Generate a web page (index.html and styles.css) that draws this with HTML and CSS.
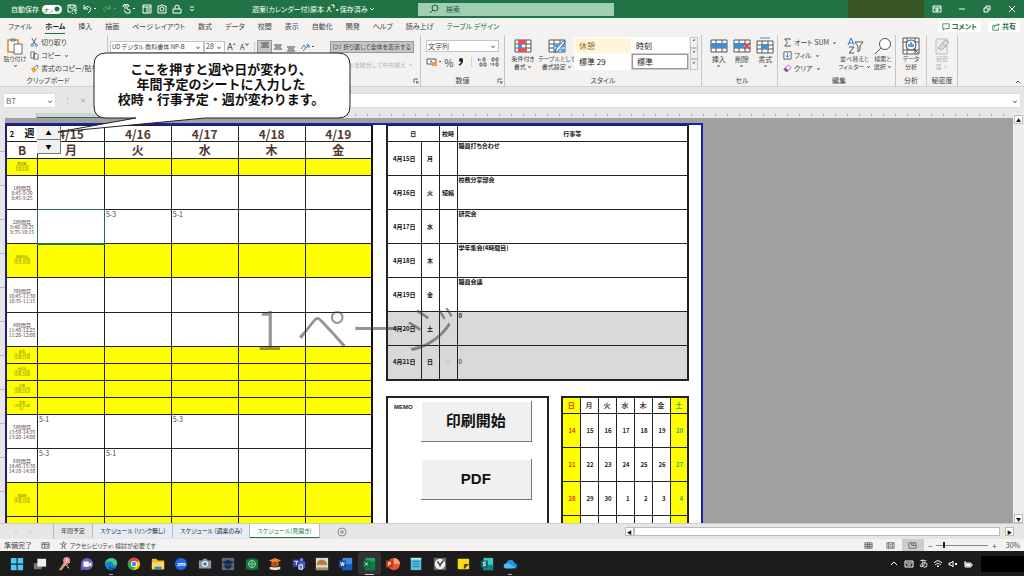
FILE: index.html
```html
<!DOCTYPE html>
<html lang="ja">
<head>
<meta charset="utf-8">
<title>週案(カレンダー付)原本</title>
<link rel="stylesheet" href="styles.css">
</head>
<body>
<header class="titlebar">
  <div class="quick">
    <label class="autosave">自動保存 <input type="checkbox" class="switch" checked><span class="switch-text">オン</span></label>
    <svg class="qi" viewBox="0 0 10 10"><path d="M1 1h7l1 1v3M1 1v7h3M3 1v3h4V1M5 8a2 2 0 0 1 4-1M9 5v2H7M9 8a2 2 0 0 1-4 1"/></svg>
    <svg class="qi wide" viewBox="0 0 15 10"><path d="M2 1v4h4M2 5c3-5 9-1 6 2L6 9M12 4l1 1 1-1"/></svg>
    <svg class="qi wide faint" viewBox="0 0 15 10"><path d="M8 1v4H4M8 5C5 0-1 4 3 8M12 4l1 1 1-1"/></svg>
    <svg class="qi wide" viewBox="0 0 15 10"><path d="M3 5V2a1 1 0 0 1 2 0v3l3 1v3H4L2 6M1 3a3 3 0 0 1 6 0M11 4l1 1 1-1"/></svg>
    <svg class="qi" viewBox="0 0 10 10"><path d="M1 1h8v8H1zM1 3h8M5 3v6M6 5h2M6 7h2"/></svg>
    <svg class="qi" viewBox="0 0 10 10"><path d="M1 2h2l1-1h2l1 1h2v7H1z"/><circle cx="5" cy="5" r="2"/></svg>
    <svg class="qi" viewBox="0 0 10 10"><path d="M1 5h8v4H1zM3 5V2l2-1 2 1v3"/></svg>
    <svg class="qi" viewBox="0 0 10 10"><path d="M3 3h4M3 5l2 2 2-2"/></svg>
  </div>
  <div class="doc">週案(カレンダー付)原本 <svg class="qi" viewBox="0 0 10 10"><circle cx="4" cy="4" r="1"/><path d="M2 8c0-3 4-3 4 0M6 1h3v3"/></svg> • 保存済み <svg class="chev" viewBox="0 0 6 6"><path d="M1 2l2 2 2-2"/></svg></div>
  <label class="search"><svg class="qi dark" viewBox="0 0 10 10"><circle cx="6" cy="4" r="3"/><path d="M4 6L1 9"/></svg><input type="search" placeholder="検索" aria-label="検索"></label>
  <div class="account"></div>
  <div class="window-buttons">
    <button aria-label="リボンの表示"><svg class="qi" viewBox="0 0 10 10"><path d="M1 2h8v6H1zM1 4h8M5 4v4M3 6h4"/></svg></button>
    <button aria-label="最小化"><svg class="qi" viewBox="0 0 10 10"><path d="M2 5h6"/></svg></button>
    <button aria-label="元に戻す"><svg class="qi" viewBox="0 0 10 10"><path d="M2 4h4v4H2zM4 4V2h4v4H6"/></svg></button>
    <button aria-label="閉じる"><svg class="qi" viewBox="0 0 10 10"><path d="M2 2l6 6M8 2L2 8"/></svg></button>
  </div>
</header>

<nav class="tabs">
  <a href="#">ファイル</a><a href="#" class="on">ホーム</a><a href="#">挿入</a><a href="#">描画</a><a href="#">ページ レイアウト</a><a href="#">数式</a><a href="#">データ</a><a href="#">校閲</a><a href="#">表示</a><a href="#">自動化</a><a href="#">開発</a><a href="#">ヘルプ</a><a href="#">読み上げ</a><a href="#" class="green">テーブル デザイン</a>
  <span class="tab-actions">
    <button><svg class="ti" viewBox="0 0 10 10"><path d="M1 1h8v6H4L2 9V7H1z"/></svg>コメント</button>
    <button><svg class="ti" viewBox="0 0 10 10"><path d="M5 3H1v6h7V6M3 6c0-3 2-4 6-4M7 1l2 1-2 2"/></svg>共有</button>
  </span>
</nav>

<section class="ribbon">
  <div class="group clipboard">
    <div class="tools">
      <button class="big"><svg viewBox="0 0 18 18"><path d="M2 3h10v12H2z" fill="#fff" stroke="#d98b2b" stroke-width="1.5"/><path d="M5 4V2h4v2z" fill="#ddd" stroke="#666"/><path d="M8 7h8v10H8z" fill="#fff" stroke="#666"/></svg><span>貼り付け</span><i class="caret"></i></button>
      <div class="stack three">
        <button><svg viewBox="0 0 10 10"><path d="M2 0l4 7M7 0L3 7" stroke="#555"/><circle cx="2.500" cy="8" r="1.300" fill="none" stroke="#2b7cd3"/><circle cx="7" cy="8" r="1.300" fill="none" stroke="#2b7cd3"/></svg>切り取り</button>
        <button><svg viewBox="0 0 10 10"><path d="M1 1h4v7H1zM4 3h4l1 1v5H4z" fill="#fff" stroke="#666"/></svg>コピー <i class="caret"></i></button>
        <button><svg viewBox="0 0 10 10"><path d="M1 5l4-2 2 4-3 3z" fill="#f0a030"/><path d="M5 4l3-3 1 2-2 3" fill="#fff" stroke="#666"/></svg>書式のコピー/貼り付け</button>
      </div>
    </div>
    <div class="name">クリップボード</div>
  </div>
  <div class="group fontalign">
    <div class="tools row">
      <label class="drop fontname"><select aria-label="フォント"><option>UD デジタル 教科書体 NP-B</option></select></label>
      <label class="drop size"><select aria-label="サイズ"><option>28</option></select></label>
      <button class="letter">Aˆ</button><button class="letter small">Aˇ</button>
      <span class="bar"></span>
      <button class="al on" aria-label="上揃え"><svg viewBox="0 0 10 10"><path d="M1 1h8M2 3h6M1 5h8" stroke="#444"/></svg></button>
      <button class="al" aria-label="中央揃え"><svg viewBox="0 0 10 10"><path d="M1 3h8M2 5h6M1 7h8" stroke="#444"/></svg></button>
      <button class="al" aria-label="下揃え"><svg viewBox="0 0 10 10"><path d="M1 5h8M2 7h6M1 9h8" stroke="#444"/></svg></button>
      <button class="al turn" aria-label="方向"><svg viewBox="0 0 16 10"><path d="M1 7l3-4 2 3" fill="none" stroke="#777"/><path d="M3 9l6-6M6 3h3v3" fill="none" stroke="#2b7cd3"/><path d="M12 4l1 1 1-1" stroke="#555" fill="none"/></svg></button>
      <button class="wrap"><svg viewBox="0 0 10 10"><path d="M1 1v8M9 1v8" stroke="#777"/><path d="M3 3h3v4H3M4 6L3 7l1 1" fill="none" stroke="#2b7cd3"/></svg>折り返して全体を表示する</button>
    </div>
    <button class="merge" disabled>セルを結合して中央揃え <i class="caret"></i></button>
    <svg class="launch" viewBox="0 0 6 6"><path d="M1 5V1h4M3 3l2 2M5 3v2H3"/></svg>
  </div>
  <div class="group number">
    <div class="tools column">
      <label class="drop"><select aria-label="表示形式"><option>文字列</option></select></label>
      <div class="numrow">
        <button aria-label="通貨"><svg viewBox="0 0 16 10"><path d="M1 2h9v5H1z" fill="#fff" stroke="#555"/><circle cx="5" cy="4.500" r="1" fill="#555"/><path d="M6 5h5v4H6z" fill="#e8a04a"/><path d="M13 4l1 1 1-1" stroke="#555" fill="none"/></svg></button>
        <button class="sym">%</button>
        <button aria-label="桁区切り"><svg viewBox="0 0 10 10"><circle cx="5" cy="3" r="2" fill="#222"/><path d="M6 3c1 3-1 4-3 5" fill="none" stroke="#222" stroke-width="1.500"/></svg></button>
        <span class="bar"></span>
        <button aria-label="小数点増"><svg viewBox="0 0 10 10"><path d="M1 3h3M2 1L1 3l1 1" stroke="#2b7cd3" fill="none"/><path d="M6 1h2v3H6zM3 6h2v3H3zM7 6h2v3H7z" fill="none" stroke="#666"/></svg></button>
        <button aria-label="小数点減"><svg viewBox="0 0 10 10"><path d="M3 1h2v3H3zM7 1h2v3H7zM7 6h2v3H7z" fill="none" stroke="#666"/><path d="M1 7h4M4 6l1 1-1 2" stroke="#2b7cd3" fill="none"/></svg></button>
      </div>
    </div>
    <div class="name">数値</div><svg class="launch" viewBox="0 0 6 6"><path d="M1 5V1h4M3 3l2 2M5 3v2H3"/></svg>
  </div>
  <div class="group style">
    <div class="tools">
      <button class="big two"><svg viewBox="0 0 18 18"><path d="M1 3h16v12H1zM1 7h16M1 11h16M6 3v12M12 3v12" fill="#fff" stroke="#555"/><path d="M4 3h8v4H4zM4 11h9v4H4z" fill="#e0525c"/><path d="M4 7h4v4H4z" fill="#4a90d0"/></svg><span>条件付き<br>書式 <i class="caret"></i></span></button>
      <button class="big two"><svg viewBox="0 0 18 18"><path d="M1 3h16v12H1zM1 7h16M1 11h16M6 3v12M12 3v12" fill="#fff" stroke="#555"/><path d="M6 7h11v8H6z" fill="#4fa3e0"/><path d="M6 11h11M12 7v8" stroke="#fff"/><path d="M17 5l-6 8-4 3 1-4 7-8z" fill="#fff" stroke="#2472b8"/></svg><span>テーブルとして<br>書式設定 <i class="caret"></i></span></button>
      <div class="gallery"><button class="rest">休憩</button><button>時刻</button><button>標準 29</button><button class="picked">標準</button></div>
      <div class="gallery-scroll"><button aria-label="上"><i class="caret up"></i></button><button aria-label="下"><i class="caret"></i></button><button aria-label="その他"><i class="caret"></i></button></div>
    </div>
    <div class="name">スタイル</div>
  </div>
  <div class="group cells">
    <div class="tools">
      <button class="big"><svg viewBox="0 0 18 18"><path d="M1 3h16v12H1zM1 7h16M1 11h16M6 3v12M12 3v12" fill="#fff" stroke="#555"/><path d="M3 6h14v5H3L0 8.500z" fill="#3f8fd0"/></svg><span>挿入</span><i class="caret"></i></button>
      <button class="big"><svg viewBox="0 0 18 18"><path d="M1 3h16v12H1zM1 7h16M1 11h16M6 3v12M12 3v12" fill="#fff" stroke="#555"/><path d="M1 6h10v5H1z" fill="#3f8fd0"/><path d="M11 6l6 6M17 6l-6 6" stroke="#d83b3b" stroke-width="1.500"/></svg><span>削除</span><i class="caret"></i></button>
      <button class="big"><svg viewBox="0 0 18 18"><path d="M1 4h16v12H1zM1 8h16M1 12h16M6 4v12M12 4v12" fill="#fff" stroke="#555"/><path d="M5 7h8v5H5z" fill="#3f8fd0"/><path d="M4 1h10" stroke="#3f8fd0"/></svg><span>書式</span><i class="caret"></i></button>
    </div>
    <div class="name">セル</div>
  </div>
  <div class="group edit">
    <div class="tools">
      <div class="stack three">
        <button><svg viewBox="0 0 10 10"><path d="M8 2V1H2l3 4-3 4h6V8" fill="none" stroke="#444"/></svg>オート SUM <i class="caret"></i></button>
        <button><svg viewBox="0 0 10 10"><path d="M1 1h8v8H1z" fill="#fff" stroke="#555"/><path d="M5 2v5M3 5l2 2 2-2" fill="none" stroke="#2b7cd3"/></svg>フィル <i class="caret"></i></button>
        <button><svg viewBox="0 0 10 10"><path d="M1 6l5-5 3 3-5 5z" fill="#fff" stroke="#a349a4"/><path d="M1 6l2-2 3 3-2 2z" fill="#a349a4"/></svg>クリア <i class="caret"></i></button>
      </div>
      <button class="big two"><svg viewBox="0 0 18 18"><path d="M2 8l3-7 3 7M3 6h4" fill="none" stroke="#2b7cd3"/><path d="M3 10h5l-5 6h5" fill="none" stroke="#555"/><path d="M9 5h8l-3 4v4l-2 2V9z" fill="#fff" stroke="#555"/></svg><span>並べ替えと<br>フィルター <i class="caret"></i></span></button>
      <button class="big two"><svg viewBox="0 0 18 18"><circle cx="11" cy="7" r="5.500" fill="#fff" stroke="#555"/><path d="M7 11l-6 6" stroke="#555"/></svg><span>検索と<br>選択 <i class="caret"></i></span></button>
    </div>
    <div class="name">編集</div>
  </div>
  <div class="group narrow">
    <div class="tools"><button class="big two"><svg viewBox="0 0 18 18"><path d="M1 1h16v16H1zM1 5h16M1 13h16M5 1v16M13 1v16" fill="#fff" stroke="#555"/><circle cx="9" cy="8" r="5" fill="#fff" stroke="#444"/><path d="M7 10V7M9 10V5M11 10V7" stroke="#2b7cd3" stroke-width="1.500"/><path d="M12 12l4 4" stroke="#444"/></svg><span>データ<br>分析</span></button></div>
    <div class="name">分析</div>
  </div>
  <div class="group narrow">
    <div class="tools off"><button class="big two" disabled><svg viewBox="0 0 18 18"><path d="M3 2h11v15H3z" fill="#eee" stroke="#bbb"/><path d="M5 11l7-8 4 2-7 8zM9 6l4 4" fill="#ddd" stroke="#aaa"/></svg><span>秘密<br>度 <i class="caret"></i></span></button></div>
    <div class="name">秘密度</div>
  </div>
  <svg class="collapse" viewBox="0 0 6 6"><path d="M1 4l2-2 2 2"/></svg>
</section>

<section class="formula">
  <label class="drop namebox"><select aria-label="名前ボックス"><option>B7</option></select></label>
  <div class="fx"><span>⋮</span><span>✕</span></div>
  <label class="drop entry"><input type="text" aria-label="数式"></label>
</section>

<main class="workspace">
  <div class="col-ruler"><span class="col-a"></span><span class="col-b"></span><span class="ticks"></span></div>
  <div class="canvas">
    <div class="row-ruler"></div>
    <div class="page">
      <table class="week">
        <colgroup><col class="c-time"><col><col><col><col><col></colgroup>
        <tr class="head"><td class="weekno"><span>2</span> <b>週</b></td><th>4/15</th><th>4/16</th><th>4/17</th><th>4/18</th><th>4/19</th></tr>
        <tr class="short"><th>B</th><th>月</th><th>火</th><th>水</th><th>木</th><th>金</th></tr>
        <tr class="short break"><td class="time">朝活動<br>8:20-8:30<br>8:20-8:30</td><td></td><td></td><td></td><td></td><td></td></tr>
        <tr><td class="time">1時間目<br>8:45-9:30<br>8:45-9:25</td><td></td><td></td><td></td><td></td><td></td></tr>
        <tr><td class="time">2時間目<br>9:40-10:25<br>9:35-10:15</td><td class="selected"></td><td>5-3</td><td>5-1</td><td></td><td></td></tr>
        <tr class="break"><td class="time">業間休み<br>10:25-10:40<br>10:15-10:30</td><td></td><td></td><td></td><td></td><td></td></tr>
        <tr class="tall"><td class="time">3時間目<br>10:45-11:30<br>10:35-11:15</td><td></td><td></td><td></td><td></td><td></td></tr>
        <tr><td class="time">4時間目<br>11:40-12:25<br>11:20-12:00</td><td></td><td></td><td></td><td></td><td></td></tr>
        <tr class="short break"><td class="time">給食<br>12:25-13:10<br>12:00-12:45</td><td></td><td></td><td></td><td></td><td></td></tr>
        <tr class="short break"><td class="time">昼休み<br>13:10-13:30<br>12:45-13:00</td><td></td><td></td><td></td><td></td><td></td></tr>
        <tr class="short break"><td class="time">清掃<br>13:30-13:45<br>13:00-13:15</td><td></td><td></td><td></td><td></td><td></td></tr>
        <tr class="short break"><td class="time">学習<br>13:40-13:50<br>なし</td><td></td><td></td><td></td><td></td><td></td></tr>
        <tr><td class="time">5時間目<br>13:50-14:35<br>13:20-14:00</td><td>5-1</td><td></td><td>5-3</td><td></td><td></td></tr>
        <tr><td class="time">6時間目<br>14:40-15:30<br>14:10-14:50</td><td>5-3</td><td>5-1</td><td></td><td></td><td></td></tr>
        <tr class="break"><td class="time">放課後<br>15:30-15:45<br>14:50-15:05</td><td></td><td></td><td></td><td></td><td></td></tr>
        <tr class="break"><td class="time"></td><td></td><td></td><td></td><td></td><td></td></tr>
      </table>
      <div class="side">
        <table class="events">
          <colgroup><col class="e-date"><col class="e-day"><col class="e-type"><col></colgroup>
          <tr class="head"><th colspan="2">日</th><th>校時</th><th>行事等</th></tr>
          <tr><th>4月15日</th><th>月</th><th></th><td>職員打ち合わせ</td></tr>
          <tr><th>4月16日</th><th>火</th><th>短縮</th><td>校務分掌部会</td></tr>
          <tr><th>4月17日</th><th>水</th><th></th><td>研究会</td></tr>
          <tr><th>4月18日</th><th>木</th><th></th><td>学年集会(4時間目)</td></tr>
          <tr><th>4月19日</th><th>金</th><th></th><td>職員会議</td></tr>
          <tr class="off-day"><th>4月20日</th><th>土</th><th></th><td>0</td></tr>
          <tr class="off-day"><th>4月21日</th><th>日</th><th class="ghost">0</th><td class="mid">0</td></tr>
        </table>
        <div class="lower">
          <div class="memo"><span>MEMO</span><div class="macro"><button>印刷開始</button><button>PDF</button></div></div>
          <table class="cal">
            <tr class="short"><th class="sun">日</th><th>月</th><th>火</th><th>水</th><th>木</th><th>金</th><th class="sat">土</th></tr>
            <tr><td class="sun">14</td><td>15</td><td>16</td><td>17</td><td>18</td><td>19</td><td class="sat">20</td></tr>
            <tr><td class="sun">21</td><td>22</td><td>23</td><td>24</td><td>25</td><td>26</td><td class="sat">27</td></tr>
            <tr><td class="sun">28</td><td>29</td><td>30</td><td>1</td><td>2</td><td>3</td><td class="sat">4</td></tr>
            <tr><td class="sun"></td><td></td><td></td><td></td><td></td><td></td><td class="sat"></td></tr>
          </table>
        </div>
      </div>
      <div class="watermark">1 ページ</div>
      <div class="spinner"><button aria-label="前の週">▲</button><button aria-label="次の週">▼</button></div>
    </div>
  </div>
  <div class="vscroll"><button aria-label="上へ">▲</button><button aria-label="下へ">▼</button></div>
</main>

<footer class="sheets">
  <div class="sheet-nav">‹<span>›</span></div>
  <a href="#">年間予定</a><a href="#" class="tint">スケジュール (リンク無し)</a><a href="#" class="tint">スケジュール (週案のみ)</a><a href="#" class="current">スケジュール(見開き)</a>
  <button class="add" aria-label="新しいシート"><svg viewBox="0 0 10 10"><circle cx="5" cy="5" r="4"/><path d="M5 3v4M3 5h4"/></svg></button>
  <div class="hscroll"><button aria-label="左へ">◀</button><span></span><button aria-label="右へ">▶</button></div>
</footer>

<div class="status">
  <span>準備完了</span>
  <svg viewBox="0 0 10 10"><path d="M1 2h8v6H1zM1 4h8M4 2v6M6 6h2"/></svg>
  <span class="access"><svg viewBox="0 0 10 10"><circle cx="5" cy="2" r="1"/><path d="M1 3l3 1v2L3 9M9 3L6 4v2l1 3M4 6h2"/></svg>アクセシビリティ: 検討が必要です</span>
  <div class="views">
    <button aria-label="標準"><svg viewBox="0 0 10 10"><path d="M1 2h8v6H1zM1 4h8M1 6h8M4 2v6M6 2v6"/></svg></button>
    <button aria-label="ページ レイアウト"><svg viewBox="0 0 10 10"><path d="M1 2h8v6H1zM3 2v6M7 2v6M4 4h2M4 6h2"/></svg></button>
    <button class="on" aria-label="改ページ プレビュー"><svg viewBox="0 0 10 10"><path d="M1 2h8v6H1zM4 2v3h2V2M6 5h3"/></svg></button>
  </div>
  <label class="zoom">−<input type="range" min="10" max="400" value="60" aria-label="ズーム">+</label><span>30%</span>
</div>

<div class="taskbar">
  <div class="apps">
    <button aria-label="スタート"><svg viewBox="0 0 16 16"><path d="M1 1h7v7H1zM8.500 1H15v7H8.500zM1 8.500h7V15H1zM8.500 8.500H15V15H8.500z" fill="#4cc8f5"/><path d="M8 1v14M1 8h14" stroke="#1c1c1c"/></svg></button>
    <button aria-label="タスクビュー"><svg viewBox="0 0 16 16"><path d="M1 7h9v7H1z" fill="#777"/><path d="M5 2h10v9H5z" fill="#eee"/></svg></button>
    <button aria-label="ペン"><svg viewBox="0 0 16 16"><path d="M2 15l6-9 3 2-6 7z" fill="#c9a37a"/><circle cx="11" cy="4" r="4" fill="#ef8f96"/><path d="M11 2v4M9 8l5 5" stroke="#fff"/><path d="M12 8v5" stroke="#b55"/></svg></button>
    <button aria-label="チャット"><svg viewBox="0 0 16 16"><circle cx="8" cy="8" r="7" fill="#6a62c0"/><path d="M1 9v6l6-1z" fill="#6a62c0"/><path d="M4 5h6v6H4zM10 8l3-2v5l-3-2z" fill="#fff"/></svg></button>
    <button aria-label="Edge" class="open"><svg viewBox="0 0 16 16"><circle cx="8" cy="8" r="7" fill="#1585c8"/><path d="M1 8C2 0 15-1 15 7c0 3-4 3-5 1 1-4-7-4-9 0" fill="#49ca86"/><path d="M7 8c-2 3 2 6 6 4-3 5-10 2-6-4" fill="#0a509d"/></svg></button>
    <button aria-label="Chrome"><svg viewBox="0 0 16 16"><circle cx="8" cy="8" r="7" fill="#fbc116"/><path d="M8 8L2 4a7 7 0 0 1 12 0z" fill="#e84335"/><path d="M8 8L2 4a7 7 0 0 0 5 11l3-5z" fill="#34a853"/><circle cx="8" cy="8" r="3.500" fill="#fff"/><circle cx="8" cy="8" r="2.500" fill="#4285f4"/></svg></button>
    <button aria-label="エクスプローラー"><svg viewBox="0 0 16 16"><path d="M1 2h5l2 2h7v10H1z" fill="#f5b52a"/><path d="M1 6h14v8H1z" fill="#ffdb62"/><path d="M4 11h8v3H4z" fill="#2f8ad8"/></svg></button>
    <button aria-label="Zoom"><svg viewBox="0 0 16 16"><circle cx="8" cy="8" r="7" fill="#2165e8"/></svg><span class="zm">zm</span></button>
    <button aria-label="カメラ"><svg viewBox="0 0 16 16"><path d="M1 4h4l1-2h4l1 2h4v9H1z" fill="#8f969d"/><circle cx="8" cy="8" r="3.500" fill="#eee"/><circle cx="8" cy="8" r="2" fill="#2775bb"/></svg></button>
    <button aria-label="学習"><svg viewBox="0 0 16 16"><path d="M1 1h14v14H1z" fill="#5c6672"/><path d="M1 6l7-3 7 3-7 3zM4 8v4l4 2 4-2V8L8 10z" fill="#14295a"/></svg></button>
    <button aria-label="地球"><svg viewBox="0 0 16 16"><path d="M1 3l7-2 7 2v11l-7 1-7-1z" fill="#14753c"/><circle cx="8" cy="8" r="4" fill="none" stroke="#9be1ad"/><path d="M4 8h8M8 4v8" stroke="#9be1ad"/></svg></button>
    <button aria-label="教材"><svg viewBox="0 0 16 16"><path d="M1 4l7-3 7 3-7 3zM4 6v4l4 1 4-1V6" fill="#e8832b"/><path d="M2 11l6 1 6-1v3l-6 1-6-1z" fill="#f3e4ce"/><path d="M5 6h6v5H5z" fill="#a44b1a"/></svg></button>
    <button aria-label="Teams"><svg viewBox="0 0 16 16"><circle cx="11" cy="3" r="2" fill="#7b83eb"/><path d="M7 5h8v7l-4 3-4-2z" fill="#5059c9"/><path d="M1 3h8v8H1z" fill="#3f48a8"/><path d="M3 5h4M5 5v4M8 9h4v5H8z" stroke="#fff" fill="#4a78c8"/></svg></button>
    <button aria-label="写真"><svg viewBox="0 0 16 16"><path d="M1 1h14v14H1z" fill="#dadccf"/><path d="M2 9c0-8 11-8 12 0z" fill="#b57c4a"/><path d="M3 9h10v3H3z" fill="#f3cf9c"/><path d="M1 12h14v3H1z" fill="#8d9b71"/></svg></button>
    <button aria-label="Word"><svg viewBox="0 0 16 16"><path d="M4 1h11v14H4z" fill="#3a8ee0"/><path d="M4 8h11v7H4z" fill="#185abd"/><path d="M0 4h8v8H0z" fill="#174aa0"/><path d="M2 6l1 4 1-4 1 4 1-4" stroke="#fff" fill="none"/></svg></button>
    <button aria-label="Excel" class="active open"><svg viewBox="0 0 16 16"><path d="M4 1h11v14H4z" fill="#21a366"/><path d="M9 5h6v10H4V8z" fill="#107c41"/><path d="M1 4h8v8H1z" fill="#0d623a"/><path d="M3 6l4 4M7 6l-4 4" stroke="#fff"/></svg></button>
    <button aria-label="PowerPoint"><svg viewBox="0 0 16 16"><circle cx="9" cy="8" r="7" fill="#e05a3a"/><path d="M9 1a7 7 0 0 1 7 7H9z" fill="#ff9a7a"/><path d="M0 4h8v8H0z" fill="#c13b1b"/><path d="M3 10V6h2v2H3" stroke="#fff" fill="none"/></svg></button>
    <button aria-label="メモ帳"><svg viewBox="0 0 16 16"><path d="M2 1h12v14H2z" fill="#5cc3de"/><path d="M4 5h8M4 8h8M4 11h8" stroke="#15718f"/><path d="M2 1h12v2H2z" fill="#b8ecf6"/></svg></button>
    <button aria-label="時計"><svg viewBox="0 0 16 16"><path d="M1 1h14v14H1z" fill="#6c6c6c"/><circle cx="8" cy="8" r="6" fill="#eee"/><path d="M5 5l3 4 4-5M8 9v2" fill="none" stroke="#333" stroke-width="1.500"/></svg></button>
    <button aria-label="付箋"><svg viewBox="0 0 16 16"><path d="M2 2h13v12H2z" fill="#fcd912"/><path d="M9 8h6l-6 6z" fill="#453f12"/></svg></button>
    <button aria-label="Sway"><svg viewBox="0 0 16 16"><path d="M4 1h11v14H4z" fill="#3ac8c0"/><path d="M4 9h11v6H4z" fill="#138582"/><path d="M1 4h8v8H1z" fill="#07686a"/><path d="M7 6H4v2h2v2H3" fill="none" stroke="#fff"/></svg></button>
    <button aria-label="OneDrive" class="open"><svg viewBox="0 0 16 16"><path d="M3 13c-4-1-2-6 1-6 1-5 8-5 9 0 4 0 4 6 0 6z" fill="#2493df"/><path d="M2 8c3-2 6 0 12 4-1 1-11 1-11 1-2-1-3-3-1-5" fill="#55b9f4"/></svg></button>
  </div>
  <div class="tray">
    <svg viewBox="0 0 10 10"><path d="M2 6l3-3 3 3"/></svg>
    <svg viewBox="0 0 10 10"><path d="M1 2h8v6H1zM2 4h6M3 6h4"/></svg>
    <span>あ</span>
    <svg viewBox="0 0 10 10"><path d="M1 4c3-3 5-3 8 0M2 6c2-2 4-2 6 0M4 7h2L5 8z"/></svg>
    <svg viewBox="0 0 10 10"><path d="M1 4h2l2-2v6L3 6H1zM7 4l2 2M9 4L7 6"/></svg>
    <svg viewBox="0 0 10 10"><path d="M2 4h6v4H2zM9 5v2M2 2v3" /><path d="M3 5h4v2H3z" fill="#fff"/></svg>
  </div>
  <div class="clock"></div>
</div>

<aside class="callout">
  <svg viewBox="0 0 300 86"><path d="M49 1H281Q293 1 293 13V54Q293 66 281 66H148L1 80L79 66H49Q37 66 37 54V13Q37 1 49 1Z"/></svg>
  <p>ここを押すと週や日が変わり、<br>年間予定のシートに入力した<br>校時・行事予定・週が変わります。</p>
</aside>
</body>
</html>
```

FILE: styles.css
```css
* { box-sizing: border-box; }
body {
  margin: 0; height: 100vh; display: flex; flex-direction: column; position: relative; overflow: hidden;
  font: 7px/9px "Noto Sans CJK JP", sans-serif; font-feature-settings: "palt"; color: #444; background: #f3f2f1;
}
button, input, select { font: inherit; font-feature-settings: inherit; color: inherit; border: 0; padding: 0; margin: 0; background: none; }
a { color: inherit; text-decoration: none; }
svg { flex: none; display: block; }
table { border-collapse: collapse; table-layout: fixed; }

.titlebar { height: 18px; flex: none; display: flex; align-items: center; background: #217346; color: #fff; }
.quick { width: 252px; padding-left: 11px; display: flex; align-items: center; gap: 5px; }
.autosave { position: relative; display: flex; align-items: center; gap: 3px; }
.switch { appearance: none; width: 20px; height: 9px; border-radius: 5px; background: radial-gradient(circle at 15px 4px, #217346 2px, #fff 3px); }
.switch-text { position: absolute; right: 9px; color: #217346; font-size: 5px; }
.qi { width: 10px; height: 10px; fill: none; stroke: #fff; }
.qi.wide { width: 15px; }
.qi.faint { opacity: .3; }
.qi.dark { stroke: #215c3c; }
.doc { width: 166px; display: flex; align-items: center; gap: 1px; white-space: nowrap; }
.chev { width: 6px; height: 6px; fill: none; stroke: #fff; }
.search { width: 196px; height: 13px; padding-left: 11px; display: flex; align-items: center; gap: 7px; background: #9fceb3; }
.search input { flex: 1; min-width: 0; outline: 0; }
.search input::placeholder { color: #215c3c; opacity: 1; }
.account { width: 76px; height: 18px; margin-left: auto; background: #375623; }
.window-buttons { width: 100px; padding-left: 1px; display: flex; }
.window-buttons button { flex: 1; display: flex; justify-content: center; }

.tabs { height: 17px; flex: none; display: flex; align-items: center; gap: 13px; padding: 0 4px 0 8px; white-space: nowrap; }
.tabs a { line-height: 13px; border-bottom: 1px solid transparent; }
.tabs .on { border-color: #217346; font-weight: bold; color: #222; }
.tabs .green { color: #217346; }
.tab-actions { margin-left: auto; display: flex; gap: 7px; }
.tab-actions button { height: 11px; padding: 0 4px; display: flex; align-items: center; gap: 2px; background: #fff; color: #217346; font-weight: bold; }
.ti { width: 8px; height: 8px; fill: none; stroke: #217346; }

.ribbon { height: 52px; flex: none; display: flex; position: relative; border-bottom: 1px solid #d2d0ce; }
.group { position: relative; display: flex; flex-direction: column; border-right: 1px solid #c8c6c4; white-space: nowrap; }
.tools { flex: 1; display: flex; padding-top: 2px; }
.name { text-align: center; height: 10px; }
.clipboard { width: 108px; }
.clipboard .name { padding-right: 11px; }
.clipboard .big { width: 30px; flex: none; font-size: 6px; }
.number { width: 84px; }
.style { width: 197px; }
.cells { width: 76px; padding-left: 5px; }
.edit { width: 118px; padding-left: 5px; }
.narrow { width: 31px; }
.fontalign { width: 313px; padding-left: 2px; }
.big { flex: 1; display: flex; flex-direction: column; align-items: center; line-height: 8px; }
.big svg { width: 18px; height: 18px; }
.two { font-size: 6px; }
.style .big { flex: none; width: 34px; }
.off { color: #b5b3b1; }
.caret { display: inline-block; width: 3px; height: 3px; border: solid currentColor; border-width: 0 1px 1px 0; rotate: 45deg; scale: .7; margin: 1px 2px; }
.two .caret { margin: 1px; }
.caret.up { rotate: 225deg; }
.stack { display: flex; flex-direction: column; }
.three { gap: 4px; padding-top: 1px; }
.stack button { display: flex; align-items: center; gap: 2px; }
.stack svg { width: 9px; height: 9px; }
.row { flex: none; height: 20px; align-items: center; padding-top: 3px; }
.column { flex-direction: column; gap: 5px; padding: 5px 5px 0; }
.drop { position: relative; display: flex; border: 1px solid #c8c6c4; background: #fff; height: 12px; }
.drop::after { content: ""; position: absolute; right: 3px; top: 3px; width: 3px; height: 3px; border: solid #555; border-width: 0 1px 1px 0; rotate: 45deg; scale: .7; }
.drop select { appearance: none; flex: 1; min-width: 0; padding: 0 1px; }
.fontname { width: 94px; font-size: 6px; }
.size { width: 21px; }
.letter { width: 13px; font-size: 9px; }
.small { font-size: 8px; }
.bar { width: 1px; height: 10px; background: #d2d0ce; margin: 0 3px; }
.al { width: 13px; height: 12px; display: flex; align-items: center; justify-content: center; }
.al svg { height: 10px; }
.al.on { background: #c8c6c4; outline: 1px solid #999; }
.turn { width: 22px; }
.wrap { margin-left: auto; margin-right: 6px; width: 84px; height: 12px; display: flex; align-items: center; justify-content: center; gap: 2px; background: #c8c6c4; border: 1px solid #999; font-size: 6px; }
.wrap svg { width: 8px; height: 8px; }
.merge { align-self: flex-end; margin: 5px 6px 0 0; color: #b5b3b1; font-size: 6px; }
.launch { position: absolute; right: 1px; bottom: 2px; width: 6px; height: 6px; fill: none; stroke: #666; }
.numrow { display: flex; align-items: center; justify-content: space-between; }
.numrow svg { height: 10px; }
.sym { font-size: 10px; }
.gallery { width: 115px; height: 33px; display: grid; grid-template-columns: 1fr 1fr; grid-template-rows: 1fr 1fr; gap: 1px; padding: 1px; background: #fff; font-size: 8px; color: #222; }
.gallery button { text-align: left; padding-left: 4px; }
.gallery .rest { background: #fff5dc; color: #a06f20; }
.gallery .picked { border: 1px solid #999; outline: 1px solid #ccc; }
.gallery-scroll { display: flex; flex-direction: column; width: 8px; height: 33px; margin-left: 1px; }
.gallery-scroll button { flex: 1; border: 1px solid #c8c6c4; line-height: 4px; display: flex; justify-content: center; }
.style .tools { padding-left: 1px; }
.collapse { position: absolute; right: 3px; bottom: 1px; width: 6px; height: 6px; fill: none; stroke: #555; }

.formula { flex: none; display: flex; align-items: center; height: 26px; padding: 3px; background: #e6e6e6; gap: 4px; }
.formula .drop { height: 15px; border-color: #ddd; align-items: center; }
.formula .drop::after { top: 5px; }
.namebox { width: 53px; }
.namebox select { padding-left: 2px; color: #666; font-size: 8px; }
.fx { width: 30px; display: flex; justify-content: space-around; color: #aaa; }
.entry { flex: 1; }
.entry input { flex: 1; }

.workspace { flex: 1; min-height: 0; display: grid; grid-template-columns: 1fr 11px; grid-template-rows: 5px 1fr; background: #e6e6e6; }
.col-ruler { display: flex; padding-left: 5px; }
.col-a { width: 32px; border-right: 1px solid #bbb; }
.col-b { width: 67px; background: #d2d2d2; border-bottom: 1px solid #217346; }
.ticks { flex: 1; background: repeating-linear-gradient(90deg, transparent 0 11px, #aaa 11px 12px) 0 1px / 100% 2px no-repeat; }
.canvas { display: flex; min-height: 0; overflow: hidden; background: #a0a0a0; }
.row-ruler { width: 5px; flex: none; background: repeating-linear-gradient(#e6e6e6 0 33px, #bbb 33px 34px); }
.page { position: relative; flex: none; width: 698px; margin-top: 5px; padding-right: 12px; border: 2px solid #1d1dae; border-left-width: 1px; border-bottom: 0; background: #fff; display: flex; justify-content: space-between; align-items: flex-start; }
.vscroll { grid-area: 1 / 2 / 3 / 3; display: flex; flex-direction: column; justify-content: space-between; padding: 2px 1px 0; background: #ededed; }
.vscroll button, .hscroll button { width: 9px; height: 9px; border: 1px solid #bbb; background: #fff; font-size: 5px; line-height: 6px; color: #111; }

tr { height: 34px; }
tr.short { height: 17px; }
tr.head { height: 16px; }
tr.tall { height: 35px; }
td, th { padding: 0; border: 1px solid #222; }
.week { width: 367px; border-right: 2px solid #111; }
.c-time { width: 31px; }
.week td { vertical-align: top; padding: 0 1px; line-height: 8px; color: #54413b; }
.week th { font-size: 12px; line-height: 14px; color: #54382c; }
.week .weekno { font-size: 10px; line-height: 14px; color: #111; vertical-align: middle; text-align: center; white-space: nowrap; }
.weekno span { font-size: 8px; font-weight: bold; margin-right: 8px; }
.week .time { vertical-align: middle; text-align: center; font-size: 5px; line-height: 5px; white-space: nowrap; overflow: hidden; }
.break { background: #ff0; }
.week .break .time { font-size: 3px; line-height: 3px; color: #77701c; }
.week .selected { border: 1px double #217346; outline: 1px solid #217346; }

.side { width: 303px; display: flex; flex-direction: column; gap: 15px; }
.events { width: 303px; border: 2px solid #222; border-top-width: 1px; color: #111; }
.e-date { width: 34px; }
.e-day, .e-type { width: 18px; }
.events th { font-size: 6px; line-height: 8px; white-space: nowrap; }
.events td { font-size: 6px; line-height: 8px; font-weight: bold; vertical-align: top; padding-left: 1px; }
.events .mid { vertical-align: middle; font-weight: normal; }
.off-day { background: #d9d9d9; }
.events .ghost { color: #bbb; font-weight: normal; }
.lower { display: flex; justify-content: space-between; }
.memo { width: 163px; display: flex; gap: 8px; border: 2px solid #222; border-bottom: 0; padding: 3px 15px 0 6px; font: bold 6px/12px "Liberation Sans", "Noto Sans CJK JP", sans-serif; color: #222; }
.macro { flex: 1; display: flex; flex-direction: column; gap: 17px; }
.macro button { height: 41px; background: #f0f0f0; border: solid #777; border-width: 0 1px 1px 0; box-shadow: inset 1px 1px #fff; font: bold 15px/20px "Liberation Sans", "Noto Sans CJK JP", sans-serif; color: #111; }
.cal { width: 128px; border: 2px solid #222; }
.cal th { font-size: 7px; line-height: 8px; color: #5a3a30; }
.cal td { font-size: 6px; line-height: 8px; font-weight: bold; color: #222; text-align: right; padding-right: 4px; }
.cal .sun { background: #ff0; color: #e03c00; }
.cal .sat { background: #ff0; color: #3cab70; }
.watermark { position: absolute; left: 4px; right: 0; top: 162px; text-align: center; font: 300 54px/80px "Noto Sans CJK JP", sans-serif; font-feature-settings: normal; color: rgba(60, 60, 60, .55); pointer-events: none; }
.spinner { position: absolute; left: 31px; top: 1px; width: 24px; display: flex; flex-direction: column; }
.spinner button { height: 14px; background: #f0f0f0; border: solid #777; border-width: 0 1px 1px 0; color: #000; font-size: 6px; line-height: 12px; }

.sheets { height: 16px; flex: none; display: flex; background: #e6e6e6; border-top: 1px solid #ccc; white-space: nowrap; }
.sheets a { height: 14px; padding: 0 7px; font-size: 6px; line-height: 14px; border-right: 1px solid #bbb; }
.sheet-nav { width: 54px; padding-left: 15px; color: #aaa; line-height: 14px; border-right: 1px solid #bbb; }
.sheet-nav span { margin-left: 12px; }
.sheets .tint { background: #e3edf7; color: #222; }
.sheets .current { background: #fff; color: #217346; border-bottom: 1px solid #217346; }
.add { margin-left: 17px; }
.add svg { width: 10px; height: 10px; fill: none; stroke: #888; }
.hscroll { margin-left: auto; width: 39%; padding-right: 10px; display: flex; align-items: center; }
.hscroll span { flex: 1; height: 9px; background: #fff; border: 1px solid #bbb; margin-right: 5px; }

.status { height: 12px; flex: none; display: flex; align-items: center; gap: 9px; padding: 0 4px; white-space: nowrap; }
.status svg { width: 9px; height: 9px; fill: none; stroke: #666; }
.access { display: flex; align-items: center; gap: 2px; font-size: 6px; }
.views { margin-left: auto; display: flex; }
.views button { width: 22px; height: 12px; display: flex; align-items: center; justify-content: center; }
.views .on { background: #cfcdcb; }
.zoom { display: flex; align-items: center; gap: 4px; margin-left: -5px; font-size: 8px; }
.zoom input { appearance: none; width: 52px; height: 1px; background: #888; }
.zoom input::-webkit-slider-thumb { appearance: none; width: 2px; height: 6px; background: #222; }

.taskbar { height: 25px; flex: none; display: flex; align-items: center; background: #1c1c1c; color: #fff; padding-left: 5px; }
.apps { width: 517px; display: grid; grid-template-columns: repeat(22, 1fr); }
.apps button { position: relative; height: 23px; display: flex; align-items: center; justify-content: center; border-radius: 3px; }
.apps svg { width: 14px; height: 14px; }
.zm { position: absolute; font: bold 6px/8px Roboto, sans-serif; color: #fff; }
.active { background: #333; }
.open::after { content: ""; position: absolute; bottom: 0; width: 4px; height: 1px; background: #aaa; }
.active.open::after { width: 9px; background: #e0c0e0; }
.tray { margin-left: auto; display: flex; align-items: center; gap: 5px; padding-right: 8px; font-size: 9px; }
.tray svg { width: 10px; height: 10px; fill: none; stroke: #fff; }
.clock { width: 43px; height: 16px; background: #000; }

.callout { position: absolute; left: 57px; top: 52px; width: 300px; }
.callout svg { width: 300px; height: 86px; fill: #fff; stroke: #222; }
.callout p { position: absolute; top: 9px; left: 36px; width: 256px; margin: 0; text-align: center; font-size: 13px; line-height: 15px; font-weight: bold; font-feature-settings: normal; color: #111; white-space: nowrap; }
```
